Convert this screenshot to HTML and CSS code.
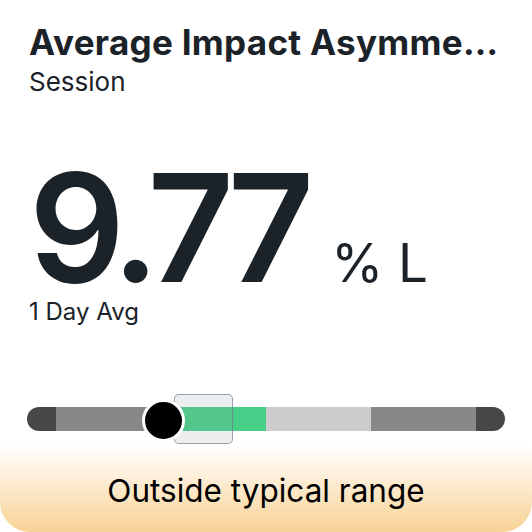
FILE: index.html
```html
<!DOCTYPE html>
<html lang="en">
<head>
<meta charset="utf-8">
<title>Average Impact Asymmetry</title>
<link rel="stylesheet" href="styles.css">
</head>
<body>
<div class="card">
  <div class="content">
    <h1 class="title">Average Impact Asymmetry</h1>
    <div class="subtitle">Session</div>
    <div class="metric">
      <span class="value">9.77</span>
      <span class="unit">% L</span>
    </div>
    <div class="caption">1 Day Avg</div>
  </div>
  <div class="range">
    <div class="bar">
      <div class="seg cap"></div>
      <div class="seg mid"></div>
      <div class="seg good"></div>
      <div class="seg light"></div>
      <div class="seg mid"></div>
      <div class="seg cap"></div>
    </div>
    <div class="window" style="left:147px"></div>
    <div class="knob" style="left:115px"></div>
  </div>
  <div class="footer">
    <span class="status">Outside typical range</span>
  </div>
</div>
</body>
</html>
```

FILE: styles.css
```css
html, body {
  margin: 0;
  padding: 0;
  background: #ffffff;
}

body {
  font-family: Inter, "Noto Sans", "Liberation Sans", sans-serif;
  color: #1b2228;
}

.card {
  width: 532px;
  height: 532px;
  display: flex;
  flex-direction: column;
  border-radius: 30px;
  overflow: hidden;
  background: #ffffff;
}

.content {
  padding: 21px 29px 0 29px;
  display: flex;
  flex-direction: column;
}

.title {
  margin: 0;
  font-size: 35px;
  line-height: 42px;
  font-weight: 700;
  white-space: nowrap;
  overflow: hidden;
  text-overflow: ellipsis;
  letter-spacing: 0.3px;
}

.subtitle {
  margin-top: 3px;
  font-size: 26px;
  line-height: 32px;
  font-weight: 400;
}

.metric {
  margin-top: 70px;
  display: flex;
  align-items: baseline;
  height: 120px;
}

.value {
  font-size: 150px;
  line-height: 120px;
  font-weight: 600;
  letter-spacing: -9px;
}

.unit {
  margin-left: 26px;
  font-size: 53px;
  line-height: 53px;
  font-weight: 400;
}

.caption {
  margin-top: 9px;
  font-size: 24px;
  line-height: 30px;
}

.range {
  position: relative;
  margin: 80px 27px 0 27px;
  height: 24px;
}

.bar {
  display: flex;
  height: 24px;
  border-radius: 12px;
  overflow: hidden;
}

.seg {
  flex: 1;
}

.seg.cap {
  flex: 0 0 29px;
  background: #474747;
}

.seg.mid {
  background: #888888;
}

.seg.good {
  background: #48cf87;
}

.seg.light {
  background: #cccccc;
}

.window {
  position: absolute;
  top: -13px;
  width: 57px;
  height: 48px;
  border: 1px solid rgba(110, 128, 142, 0.7);
  border-radius: 5px;
  background: rgba(140, 152, 168, 0.17);
}

.knob {
  position: absolute;
  top: -8px;
  width: 37px;
  height: 37px;
  border: 3px solid #ffffff;
  border-radius: 50%;
  background: #000000;
}

.footer {
  flex: 1;
  margin-top: 14px;
  display: flex;
  align-items: center;
  justify-content: center;
  background: linear-gradient(to bottom, #ffffff 0%, #fdebcf 45%, #f7d295 100%);
}

.status {
  font-size: 31.5px;
  font-weight: 400;
  color: #000000;
  margin-top: 3px;
}
```
